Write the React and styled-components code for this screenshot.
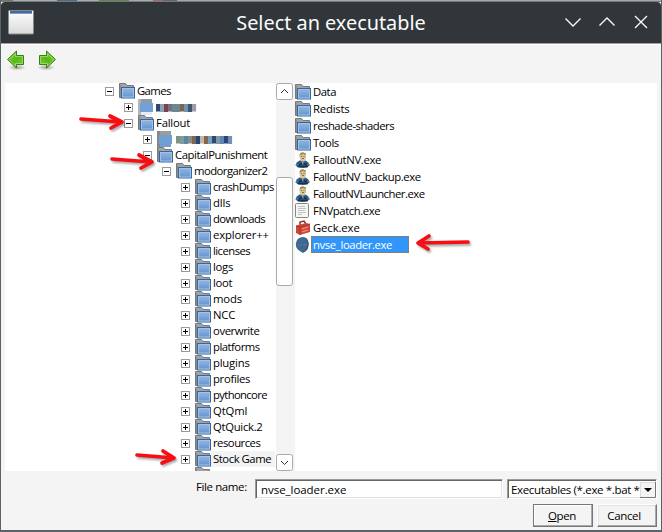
import React from "react";
import styled, { createGlobalStyle, css } from "styled-components";

const GlobalStyle = createGlobalStyle`
  * { box-sizing: border-box; }
  body { margin: 0; overflow: hidden; background: #5d666d; }
`;

const Window = styled.div`
  width: 662px;
  height: 532px;
  display: flex;
  flex-direction: column;
  position: relative;
  border: solid #59636b;
  border-width: 0 1px 2px 1px;
  background: #f4f4f4;
  color: #000;
  font: 11.5px/16px "Open Sans", "Noto Sans", sans-serif;
  letter-spacing: -0.2px;
`;
const Backdrop = styled.div`
  height: 2px;
  flex: none;
  background: linear-gradient(90deg, #74785f 0 12px, #aaa 12px 56px, #506b87 56px 76px, #aaa 76px 98px, #65864d 98px 128px, #aaa 128px 152px, #a66 152px 162px, #666 162px 176px, #a7a8a5 176px);
  border-bottom: 1px solid #737b7f;
`;
const TitleBar = styled.header`
  height: 41px;
  flex: none;
  display: grid;
  grid-template-columns: 124px 1fr 124px;
  align-items: center;
  background: #31363b;
  border-radius: 4px 4px 0 0;
`;
const AppIcon = styled.svg`
  width: 28px;
  height: 26px;
  margin-left: 6px;
  margin-top: -2px;
`;
const Title = styled.h1`
  margin: 0;
  text-align: center;
  color: #fcfcfc;
  font: 400 19.85px/26px "Noto Sans", sans-serif;
  letter-spacing: 0;
  white-space: nowrap;
`;
const WindowControls = styled.svg`
  width: 124px;
  height: 41px;
`;
const ToolBar = styled.nav`
  height: 40px;
  flex: none;
  border-top: 1px solid #a69b9b;
  padding: 6px 0 0 5px;
  display: flex;
  gap: 9px;
  box-shadow: inset 0 1px #fff;
`;
const ToolIcon = styled.svg`
  width: 21px;
  height: 22px;
  ${(p) => p.$flip && css`transform: scaleX(-1);`}
`;
const Panes = styled.main`
  height: 388px;
  flex: none;
  margin: 0 4px;
  display: grid;
  grid-template-columns: 271px 17px 2px 362px;
`;
const Tree = styled.div`
  background: #fff;
  overflow: hidden;
  height: 388px;
`;
const TreeRow = styled.div`
  height: 16px;
  display: flex;
  align-items: center;
  padding-left: ${(p) => 100 + p.$level * 19}px;
`;
const Expander = styled.svg`
  width: 9px;
  height: 9px;
  flex: none;
  margin-right: 5px;
`;
const RowIcon = styled.svg`
  width: 16px;
  height: 16px;
  flex: none;
`;
const Label = styled.span`
  height: 16px;
  line-height: 16px;
  padding-left: 2px;
  white-space: nowrap;
  font-size: 11.3px;
  letter-spacing: ${(p) => p.$track}px;
  ${(p) => p.$current && css`background: #f3f3f3; padding-right: 4px;`}
`;
const Mosaic = styled.svg`
  width: 84px;
  height: 16px;
  margin-left: -1px;
`;
const ScrollBar = styled.div`
  background: #f4f4f4;
  display: flex;
  flex-direction: column;
  height: 388px;
`;
const ScrollButton = styled.svg`
  width: 17px;
  height: 17px;
  flex: none;
`;
const Thumb = styled.div`
  height: 109px;
  width: 17px;
  border: 1px solid #aaa;
  border-radius: 3px;
  background: #fff;
  margin: 77px 0 168px;
`;
const Gap = styled.div`
  background: #f4f4f4;
`;
const FileList = styled.div`
  background: #fff;
  height: 388px;
`;
const FileRow = styled.div`
  height: 17px;
  display: flex;
  align-items: center;
`;
const FileName = styled.span`
  height: 17px;
  line-height: 16px;
  padding: 1px 0 0 2px;
  white-space: nowrap;
  font-size: 11.3px;
  letter-spacing: ${(p) => p.$track}px;
  ${(p) => p.$selected && css`
    width: 98px;
    padding: 0 0 0 1px;
    color: #fff;
    background: #3096fa;
    border: 1px dotted #cf6905;
  `}
`;
const Footer = styled.footer`
  height: 59px;
  display: grid;
  grid-template-columns: 254px 248px 4px 150px;
  grid-template-rows: 20px 24px;
  row-gap: 5px;
  padding-top: 8px;
`;
const FieldLabel = styled.label`
  padding-left: 195px;
  line-height: 15px;
  letter-spacing: -0.4px;
`;
const sunken = css`
  border: 1px solid;
  border-color: #9b9b9b #fff #fff #9b9b9b;
  box-shadow: inset 1px 1px #666, inset -1px -1px #e2e2e2;
  background: #fff;
`;
const Field = styled.div`
  ${sunken}
  height: 20px;
  padding: 2px 0 0 5px;
  letter-spacing: -0.05px;
`;
const Select = styled.div`
  ${sunken}
  grid-column: 4;
  height: 20px;
  padding: 2px 1px 2px 3px;
  display: flex;
  justify-content: space-between;
  overflow: hidden;
`;
const SelectText = styled.span`
  white-space: nowrap;
  letter-spacing: -0.35px;
`;
const DropButton = styled.svg`
  width: 16px;
  height: 16px;
  flex: none;
`;
const Actions = styled.div`
  grid-column: 1 / -1;
  display: flex;
  justify-content: flex-end;
  gap: 4px;
`;
const Button = styled.button`
  width: 60px;
  height: 23px;
  padding: 0 6px 0 0;
  font: inherit;
  letter-spacing: -0.35px;
  color: #000;
  background: #f4f4f4;
  border: 1px solid;
  border-color: ${(p) => (p.$primary ? "#777" : "#fff #777 #777 #fff")};
  padding-right: ${(p) => (p.$primary ? 2 : 6)}px;
  box-shadow: inset -1px -1px #aaa, inset 1px 1px ${(p) => (p.$primary ? "#fff" : "#e2e2e2")};
`;
const Annotations = styled.svg`
  position: absolute;
  left: -1px;
  top: 0;
  width: 662px;
  height: 532px;
  pointer-events: none;
`;

const FolderIcon = () => (
  <RowIcon viewBox="0 0 16 16">
    <path d="M.5 14.5V.5H6.5L8 2.5H14.5V5H4V14.5Z" fill="#a2a4a3" stroke="#777978" />
    <path d="M1.5 14V2" stroke="#8c8e8d" />
    <rect x="2.500" y="4.500" width="13" height="10.500" fill="#729fcf" stroke="#3465a4" />
    <rect x="3.500" y="5.500" width="11" height="8.500" fill="url(#folderFace)" stroke="#a3c2e4" />
  </RowIcon>
);
const VaultIcon = () => (
  <RowIcon viewBox="0 0 16 16">
    <path d="M.5 13.500Q1 10 4.500 8.500L10.500 8.500Q14 10 14.500 13.500Q12 16 8 16Q3 16 .5 13.500Z" fill="#2b5c89" />
    <path d="M2.500 14.500H13" stroke="#18324c" strokeWidth="1.500" fill="none" />
    <path d="M4.500 2Q8-.5 11 2V6L9.500 9.500H6.500L4.500 6Z" fill="#d9c49a" />
    <path d="M4.500 3.500L5.500.8L8 .3L11 1.500L10.500 3L8 2L6 3Z" fill="#a08a4d" />
    <path d="M6 4.500H7M8.500 4.500H9.500M7 6.500H9" stroke="#6b5638" strokeWidth=".8" />
    <path d="M7.800 9V12" stroke="#c5ae70" />
    <path d="M4 13L7 11.500M9 11.500L12 13" stroke="#173149" strokeWidth="1.500" />
    <path d="M1 13L3 12.500M12.500 12.500L15 13" stroke="#8b8260" />
  </RowIcon>
);
const DocumentIcon = () => (
  <RowIcon viewBox="0 0 16 16">
    <rect x=".5" y=".5" width="13" height="14" rx="1" fill="#f5f5f3" stroke="#858783" />
    <path d="M3 3.500H10M3 5.500H11M3 7.500H10M3 9.500H11M3 11.500H7" stroke="#c2c4c0" />
  </RowIcon>
);
const ToolboxIcon = () => (
  <RowIcon viewBox="0 0 16 16">
    <path d="M5 5V2L9 1L11 4" fill="none" stroke="#8f3028" strokeWidth="1.500" />
    <path d="M1 5.500L11 3L15 4V12L5 15L1 13Z" fill="#cf4638" />
    <path d="M1 6L5 7L15 4M5 7V15" stroke="#9b332a" strokeWidth=".8" fill="none" />
    <path d="M7 9L13 7M7 12L13 10" stroke="#e7958b" strokeWidth="1.300" />
  </RowIcon>
);
const LoaderIcon = () => (
  <RowIcon viewBox="0 0 16 16">
    <path d="M1 6Q2 0 8 0Q13 0 13.500 6Q14 11 11 14L8 16L4 13.500Q0 11 1 6Z" fill="#3a6b93" />
    <path d="M10 1Q14 4 12 10L9 15Q13 13 13.500 8Q14 3 10 1Z" fill="#2f5273" />
    <path d="M3 8H6.500M8.500 8H12" stroke="#8a5a8c" strokeWidth="1.300" />
  </RowIcon>
);

const redactions = {
  games: {
    head: ["#b4b6b7", "#8c9aa9", "#72a1d7", "#e3edf8"],
    start: 19,
    colors: ["#2c486e", "#8aa1b6", "#823f4b", "#6e7282", "#6f8791", "#6b8792", "#7c664f", "#6e96b2", "#405570", "#999faa"],
  },
  fallout: {
    head: ["#858788", "#9b9c9c", "#709fd4", "#749dcc"],
    start: 20,
    colors: ["#7c9486", "#859b99", "#5a87a2", "#8c8c84", "#7c675a", "#28487c", "#c4b5a5", "#83674d", "#799fb9", "#2d4873", "#8097a5", "#5e87b3", "#294776", "#738fb6"],
  },
};
const Redacted = ({ data }) => (
  <Mosaic viewBox="0 0 84 16">
    <path d="M1 0H4V16H1Z" fill={data.head[0]} />
    <path d="M4 0H15V5H4Z" fill={data.head[1]} />
    <path d="M3 4H16V13H3Z" fill={data.head[2]} />
    <path d="M4 13H15V16H4Z" fill={data.head[3]} />
    {data.colors.map((c, i) => (
      <rect key={i} x={data.start + i * 4} y="5" width="4.100" height={i % 3 ? 8 : 7.500} fill={c} />
    ))}
  </Mosaic>
);

const folders = [
  "crashDumps", "dlls", "downloads", "explorer++", "licenses", "logs", "loot", "mods", "NCC",
  "overwrite", "platforms", "plugins", "profiles", "pythoncore", "QtQml", "QtQuick.2", "resources", "Stock Game",
];
const tree = [
  ["Games", 0, true], ["games", 1, false, true], ["Fallout", 1, true],
  ["fallout", 2, false, true], ["CapitalPunishment", 2, true], ["modorganizer2", 3, true],
  ...folders.map((n) => [n, 4, false]),
  ["", 4, false],
];
const files = [
  ["Data", FolderIcon], ["Redists", FolderIcon], ["reshade-shaders", FolderIcon], ["Tools", FolderIcon],
  ["FalloutNV.exe", VaultIcon], ["FalloutNV_backup.exe", VaultIcon], ["FalloutNVLauncher.exe", VaultIcon],
  ["FNVpatch.exe", DocumentIcon], ["Geck.exe", ToolboxIcon], ["nvse_loader.exe", LoaderIcon],
];

/* Letter spacing per entry, approximating the whole-pixel advances of hinted text. */
const tracking = {
  Games: -0.6, Fallout: -0.2, CapitalPunishment: -0.44, modorganizer2: -0.54,
  crashDumps: -0.58, downloads: -0.63, "explorer++": -0.15, licenses: -0.55,
  logs: -0.3, loot: -0.3, overwrite: -0.4, platforms: -0.5, plugins: -0.2,
  profiles: -0.3, pythoncore: -0.65, "QtQuick.2": -0.3, resources: -0.5, "Stock Game": -0.45,
  Data: -0.45, Redists: -0.2, "reshade-shaders": -0.48, Tools: -0.45,
  "FalloutNV.exe": -0.33, "FalloutNV_backup.exe": -0.4, "FalloutNVLauncher.exe": -0.48,
  "FNVpatch.exe": -0.42, "Geck.exe": -0.1, "nvse_loader.exe": -0.37,
};
const trackOf = (name) => tracking[name] ?? -0.15;

const NavArrow = ({ flip }) => (
  <ToolIcon $flip={flip} viewBox="0 0 21 22">
    <ellipse cx="11" cy="17.500" rx="9" ry="3" fill="url(#shadow)" />
    <path d="M1.500 9.500L10.500 1V5.500H17.500V14.500H10.500V18Z" fill="url(#green)" stroke="#3d7d12" />
    <path d="M3 9.500L9.500 3.500V6.500H16.500V13.500H9.500V16Z" fill="none" stroke="#a3df79" strokeOpacity=".8" />
  </ToolIcon>
);
const Arrow = ({ d }) => (
  <g fill="none" strokeLinecap="round" strokeLinejoin="round">
    <path d={d} stroke="#000" strokeOpacity=".35" strokeWidth="3.500" transform="translate(1.500 2)" filter="url(#soft)" />
    <path d={d} stroke="#f80d12" strokeWidth="3.700" />
  </g>
);

export default function App() {
  return (
    <>
      <GlobalStyle />
      <Window>
        <Backdrop />
        <TitleBar>
          <AppIcon viewBox="0 0 28 26">
            <defs>
              <linearGradient id="paper" x2="0" y2="1"><stop stopColor="#fff" /><stop offset="1" stopColor="#d9d9d9" /></linearGradient>
              <linearGradient id="folderFace" x2="0" y2="1"><stop stopColor="#8fb4df" /><stop offset="1" stopColor="#6697cf" /></linearGradient>
              <linearGradient id="green" x2="1" y2="1"><stop stopColor="#93d75d" /><stop offset=".5" stopColor="#56b812" /><stop offset="1" stopColor="#82cf43" /></linearGradient>
              <radialGradient id="shadow"><stop stopOpacity=".35" /><stop offset="1" stopOpacity="0" /></radialGradient>
              <filter id="soft" x="-20%" y="-50%" width="140%" height="200%"><feGaussianBlur stdDeviation="1.200" /></filter>
            </defs>
            <rect x="1.500" y="1.500" width="25" height="23.500" rx="1" fill="url(#paper)" stroke="#898b88" />
            <path d="M3 3.500H25" stroke="#4568a3" strokeWidth="3" />
            <path d="M3 4.500H25" stroke="#7d9cca" />
          </AppIcon>
          <Title>Select an executable</Title>
          <WindowControls viewBox="537 2 124 41" fill="none" stroke="#fcfcfc" strokeWidth="1.300">
            <path d="M565.500 18.500L573 26L580.500 18.500M599.500 25.500L607 18L614.500 25.500M635 16L647 28M647 16L635 28" />
          </WindowControls>
        </TitleBar>
        <ToolBar><NavArrow /><NavArrow flip /></ToolBar>
        <Panes>
          <Tree>
            {tree.map(([name, level, open, redacted]) => (
              <TreeRow key={name} $level={level}>
                <Expander viewBox="0 0 9 9">
                  <rect x=".5" y=".5" width="8" height="8" fill="#fff" stroke="#9a9a9a" />
                  <path d={open ? "M2 4.500H7" : "M2 4.500H7M4.500 2V7"} stroke="#000" />
                </Expander>
                {redacted ? <Redacted data={redactions[name]} /> : (
                  <>
                    <FolderIcon />
                    <Label $track={trackOf(name)} $current={name === "Stock Game"}>{name}</Label>
                  </>
                )}
              </TreeRow>
            ))}
          </Tree>
          <ScrollBar>
            <ScrollButton viewBox="0 0 17 17"><rect x=".5" y=".5" width="16" height="16" rx="2" fill="#fff" stroke="#aaa" /><path d="M5 10L8.500 6.500L12 10" fill="none" stroke="#333" /></ScrollButton>
            <Thumb />
            <ScrollButton viewBox="0 0 17 17"><rect x=".5" y=".5" width="16" height="16" rx="2" fill="#fff" stroke="#aaa" /><path d="M5 7L8.500 10.500L12 7" fill="none" stroke="#333" /></ScrollButton>
          </ScrollBar>
          <Gap />
          <FileList>
            {files.map(([name, Icon]) => (
              <FileRow key={name}>
                <Icon />
                <FileName $track={trackOf(name)} $selected={name === "nvse_loader.exe"}>{name}</FileName>
              </FileRow>
            ))}
          </FileList>
        </Panes>
        <Footer>
          <FieldLabel>File name:</FieldLabel>
          <Field>nvse_loader.exe</Field>
          <Select>
            <SelectText>Executables (*.exe *.bat *</SelectText>
            <DropButton viewBox="0 0 16 16">
              <path d="M0 0H16V16H0Z" fill="#f4f4f4" />
              <path d="M.5 15V.5H15" stroke="#ddd" fill="none" />
              <path d="M15.500 0V15.500H0" stroke="#777" fill="none" />
              <path d="M4 6H12L8 10Z" fill="#000" />
            </DropButton>
          </Select>
          <Actions>
            <Button $primary><u>O</u>pen</Button>
            <Button>Cancel</Button>
          </Actions>
        </Footer>
        <Annotations viewBox="0 0 662 532">
          <Arrow d="M81 119L121 122M110 116L122 122L111 128" />
          <Arrow d="M112 159L151 162M139 155L152 162L141 168" />
          <Arrow d="M137 455L174 458M163 451L174 458L162 463" />
          <Arrow d="M468 242L418 243M429 236L418 243L428 249" />
        </Annotations>
      </Window>
    </>
  );
}
